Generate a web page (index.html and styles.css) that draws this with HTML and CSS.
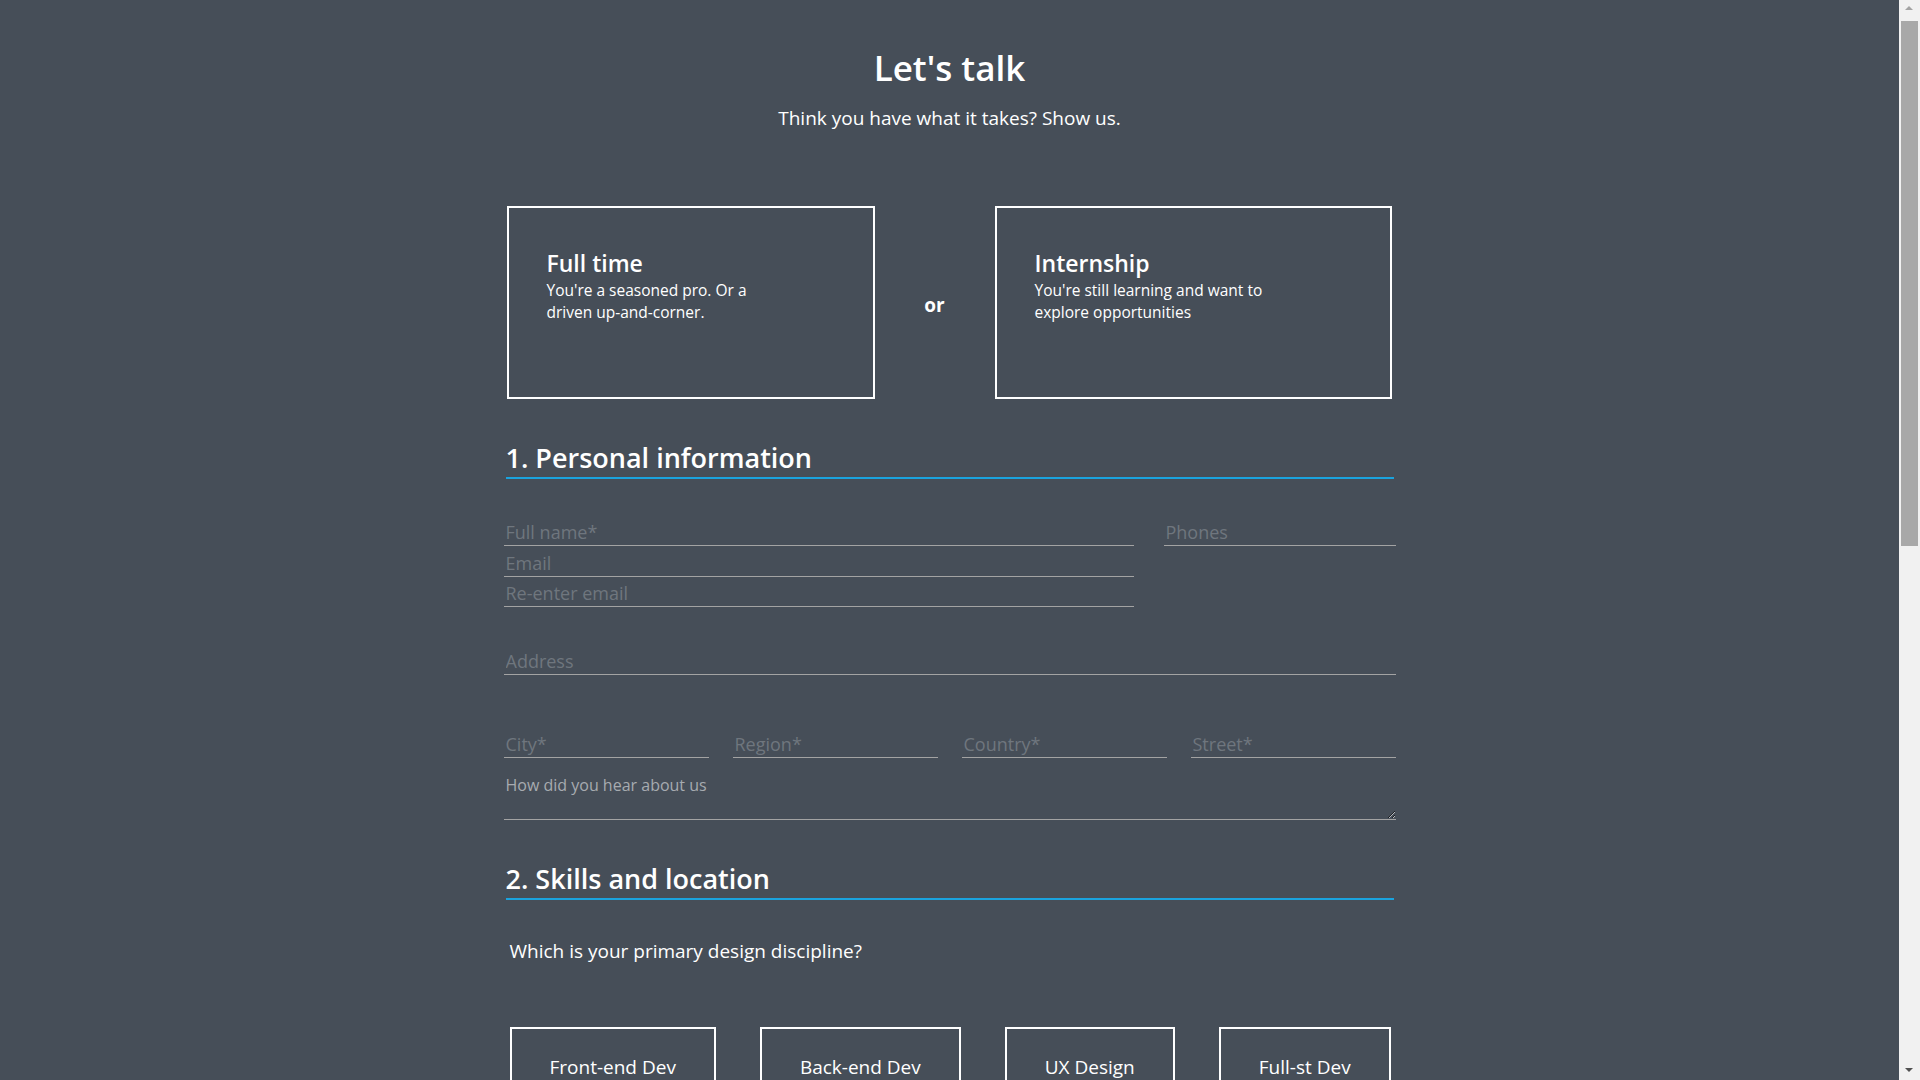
FILE: index.html
```html
<!DOCTYPE html>
<html lang="en">
<head>
<meta charset="utf-8">
<title>Let's talk</title>
<link rel="stylesheet" href="styles.css">
</head>
<body>
<main class="page">
  <header class="intro">
    <h1 class="title">Let's talk</h1>
    <p class="subtitle">Think you have what it takes? Show us.</p>
  </header>

  <div class="choice">
    <div class="card">
      <h3 class="card-title">Full time</h3>
      <p class="card-text">You're a seasoned pro. Or a driven up-and-corner.</p>
    </div>
    <span class="or">or</span>
    <div class="card">
      <h3 class="card-title">Internship</h3>
      <p class="card-text">You're still learning and want to explore opportunities</p>
    </div>
  </div>

  <section class="section">
    <h2 class="section-title">1. Personal information</h2>
    <div class="contact-grid">
      <div class="stack">
        <input class="field" type="text" placeholder="Full name*">
        <input class="field" type="email" placeholder="Email">
        <input class="field" type="email" placeholder="Re-enter email">
      </div>
      <div class="stack">
        <input class="field" type="tel" placeholder="Phones">
      </div>
    </div>
    <input class="field address" type="text" placeholder="Address">
    <div class="location-grid">
      <input class="field" type="text" placeholder="City*">
      <input class="field" type="text" placeholder="Region*">
      <input class="field" type="text" placeholder="Country*">
      <input class="field" type="text" placeholder="Street*">
    </div>
    <textarea class="notes" placeholder="How did you hear about us"></textarea>
  </section>

  <section class="section">
    <h2 class="section-title">2. Skills and location</h2>
    <p class="question">Which is your primary design discipline?</p>
    <div class="disciplines">
      <button class="discipline" type="button">Front-end Dev</button>
      <button class="discipline" type="button">Back-end Dev</button>
      <button class="discipline" type="button">UX Design</button>
      <button class="discipline" type="button">Full-st Dev</button>
    </div>
  </section>
</main>

<div class="scrollbar" aria-hidden="true">
  <span class="sb-up"></span>
  <span class="sb-thumb"></span>
  <span class="sb-down"></span>
</div>
</body>
</html>
```

FILE: styles.css
```css
html, body {
  margin: 0;
  height: 100%;
  overflow: hidden;
}

body {
  background: #464e58;
  color: #ffffff;
  font-family: "Open Sans", "Noto Sans", sans-serif;
  padding-right: 21px;
  box-sizing: border-box;
}

.page {
  width: 892px;
  margin: 0 auto;
  padding-top: 46px;
}

.intro {
  text-align: center;
}

.title {
  margin: 0;
  font-size: 35px;
  line-height: 44px;
  font-weight: 600;
}

.subtitle {
  margin: 15px 0 0;
  font-size: 19px;
  line-height: 26px;
}

.choice {
  display: grid;
  grid-template-columns: 368px 120px 397px;
  align-items: center;
  padding: 0 3px 0 3px;
  margin-top: 75px;
}

.card {
  height: 193px;
  box-sizing: border-box;
  border: 2px solid #ffffff;
  padding: 41px 20px 0 38px;
}

.card-title {
  margin: 0;
  font-size: 23px;
  line-height: 28px;
  font-weight: 600;
}

.card-text {
  margin: 2px 0 0;
  max-width: 242px;
  font-size: 15.5px;
  line-height: 22px;
}

.or {
  text-align: center;
  font-size: 19px;
  font-weight: 700;
  padding-top: 4px;
}

.section-title {
  margin: 41.5px 2px 0;
  padding-bottom: 2px;
  border-bottom: 2px solid #1aa3de;
  font-size: 27px;
  line-height: 34px;
  font-weight: 600;
}

.field {
  display: block;
  width: 100%;
  height: 27px;
  box-sizing: border-box;
  margin: 0;
  padding: 0 2px;
  border: 0;
  border-bottom: 1px solid #a3a3a3;
  background: transparent;
  color: #ffffff;
  font-family: inherit;
  font-size: 18px;
  outline: none;
}

.field::placeholder {
  color: #6f767e;
  opacity: 1;
}

.contact-grid {
  display: grid;
  grid-template-columns: 630px 1fr;
  column-gap: 30px;
  margin-top: 40.5px;
}

.stack {
  display: flex;
  flex-direction: column;
  gap: 3.5px;
}

.address {
  margin-top: 41px;
}

.location-grid {
  display: grid;
  grid-template-columns: repeat(4, 1fr);
  column-gap: 24px;
  margin-top: 56px;
}

.notes {
  display: block;
  width: 100%;
  height: 46px;
  box-sizing: border-box;
  margin: 16px 0 1.5px;
  padding: 0 2px;
  border: 0;
  border-bottom: 1px solid #a3a3a3;
  background: transparent;
  color: #ffffff;
  font-family: inherit;
  font-size: 16px;
  line-height: 22px;
  outline: none;
}

.notes::placeholder {
  color: #a7abb0;
  opacity: 1;
}

.question {
  margin: 38px 0 0;
  padding-left: 6px;
  font-size: 19px;
  line-height: 26px;
}

.disciplines {
  display: flex;
  gap: 44px;
  margin-top: 63px;
  padding-left: 6px;
}

.discipline {
  margin: 0;
  padding: 25px 38px;
  border: 2px solid #ffffff;
  background: transparent;
  color: #ffffff;
  font-family: inherit;
  font-size: 19px;
  line-height: 26px;
}

/* decorative scrollbar overlay */
.scrollbar {
  position: fixed;
  top: 0;
  right: 0;
  width: 21px;
  height: 100vh;
  background: #f1f1f1;
}

.sb-up,
.sb-down {
  position: absolute;
  left: 6px;
  width: 0;
  height: 0;
  border-left: 4.5px solid transparent;
  border-right: 4.5px solid transparent;
}

.sb-up {
  top: 6px;
  border-bottom: 4.5px solid #a3a3a3;
}

.sb-down {
  bottom: 8px;
  border-top: 4.5px solid #505050;
}

.sb-thumb {
  position: absolute;
  top: 21px;
  left: 2px;
  width: 17px;
  height: 525px;
  background: #a8a8a8;
}
```
